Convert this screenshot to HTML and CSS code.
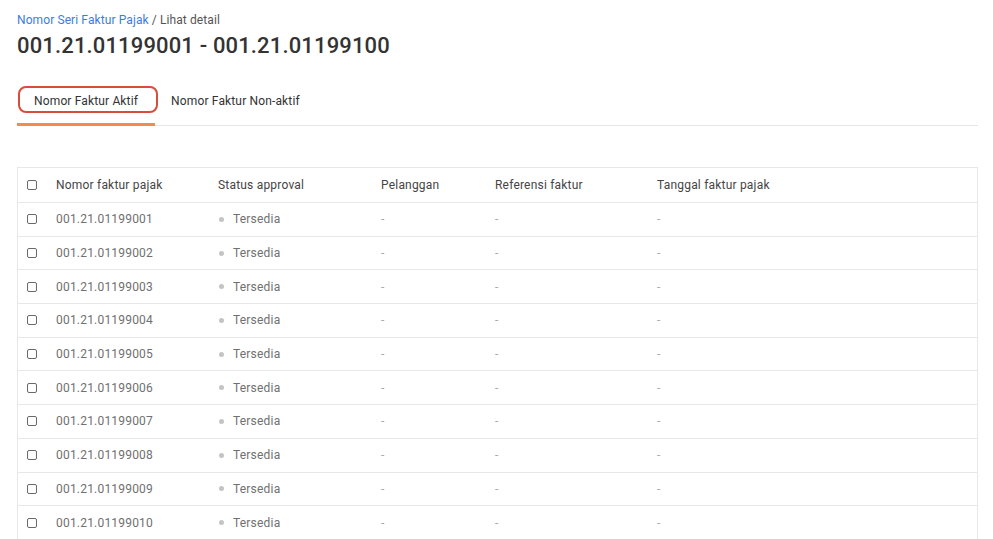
FILE: index.html
```html
<!DOCTYPE html>
<html lang="id">
<head>
<meta charset="utf-8">
<title>Nomor Seri Faktur Pajak</title>
<link rel="stylesheet" href="styles.css">
</head>
<body>
<div class="page">
  <div class="breadcrumb"><a class="crumb-link" href="#">Nomor Seri Faktur Pajak</a> / Lihat detail</div>
  <h1 class="title">001.21.01199001 - 001.21.01199100</h1>

  <div class="tabs">
    <div class="tab active">Nomor Faktur Aktif<span class="highlight"></span></div>
    <div class="tab">Nomor Faktur Non-aktif</div>
  </div>

  <div class="table">
    <div class="row head">
      <div class="cell cb"><span class="checkbox"></span></div>
      <div class="cell">Nomor faktur pajak</div>
      <div class="cell">Status approval</div>
      <div class="cell">Pelanggan</div>
      <div class="cell">Referensi faktur</div>
      <div class="cell">Tanggal faktur pajak</div>
    </div>
    <div class="row"><div class="cell cb"><span class="checkbox"></span></div><div class="cell">001.21.01199001</div><div class="cell"><span class="dot"></span>Tersedia</div><div class="cell dash">-</div><div class="cell dash">-</div><div class="cell dash">-</div></div>
    <div class="row"><div class="cell cb"><span class="checkbox"></span></div><div class="cell">001.21.01199002</div><div class="cell"><span class="dot"></span>Tersedia</div><div class="cell dash">-</div><div class="cell dash">-</div><div class="cell dash">-</div></div>
    <div class="row"><div class="cell cb"><span class="checkbox"></span></div><div class="cell">001.21.01199003</div><div class="cell"><span class="dot"></span>Tersedia</div><div class="cell dash">-</div><div class="cell dash">-</div><div class="cell dash">-</div></div>
    <div class="row"><div class="cell cb"><span class="checkbox"></span></div><div class="cell">001.21.01199004</div><div class="cell"><span class="dot"></span>Tersedia</div><div class="cell dash">-</div><div class="cell dash">-</div><div class="cell dash">-</div></div>
    <div class="row"><div class="cell cb"><span class="checkbox"></span></div><div class="cell">001.21.01199005</div><div class="cell"><span class="dot"></span>Tersedia</div><div class="cell dash">-</div><div class="cell dash">-</div><div class="cell dash">-</div></div>
    <div class="row"><div class="cell cb"><span class="checkbox"></span></div><div class="cell">001.21.01199006</div><div class="cell"><span class="dot"></span>Tersedia</div><div class="cell dash">-</div><div class="cell dash">-</div><div class="cell dash">-</div></div>
    <div class="row"><div class="cell cb"><span class="checkbox"></span></div><div class="cell">001.21.01199007</div><div class="cell"><span class="dot"></span>Tersedia</div><div class="cell dash">-</div><div class="cell dash">-</div><div class="cell dash">-</div></div>
    <div class="row"><div class="cell cb"><span class="checkbox"></span></div><div class="cell">001.21.01199008</div><div class="cell"><span class="dot"></span>Tersedia</div><div class="cell dash">-</div><div class="cell dash">-</div><div class="cell dash">-</div></div>
    <div class="row"><div class="cell cb"><span class="checkbox"></span></div><div class="cell">001.21.01199009</div><div class="cell"><span class="dot"></span>Tersedia</div><div class="cell dash">-</div><div class="cell dash">-</div><div class="cell dash">-</div></div>
    <div class="row"><div class="cell cb"><span class="checkbox"></span></div><div class="cell">001.21.01199010</div><div class="cell"><span class="dot"></span>Tersedia</div><div class="cell dash">-</div><div class="cell dash">-</div><div class="cell dash">-</div></div>
  </div>
</div>
</body>
</html>
```

FILE: styles.css
```css
* { box-sizing: border-box; }
html, body { margin: 0; padding: 0; background: #fff; }
body {
  font-family: Roboto, "Liberation Sans", Arial, sans-serif;
  color: #333;
  overflow: hidden;
}
.page {
  padding: 12px 15px 0 17px;
}
.breadcrumb {
  font-size: 12px;
  line-height: 16px;
  letter-spacing: 0.1px;
  color: #555;
}
.crumb-link {
  color: #3b7ddd;
  text-decoration: none;
}
.title {
  margin: 4px 0 0;
  font-size: 22px;
  line-height: 28px;
  font-weight: 500;
  color: #333;
  letter-spacing: 0.15px;
}
.tabs {
  margin-top: 23px;
  display: flex;
  border-bottom: 1px solid #e6e6e6;
}
.tab {
  position: relative;
  padding: 10px 17px 16px;
  font-size: 12px;
  line-height: 16px;
  letter-spacing: 0.15px;
  color: #333;
}
.tab + .tab { padding-left: 16px; }
.tab.active::after {
  content: "";
  position: absolute;
  left: 0;
  right: 0;
  bottom: -1px;
  height: 3px;
  background: #f28b4c;
}
.highlight {
  position: absolute;
  left: 1px;
  top: 3px;
  width: 140px;
  height: 27px;
  border: 2.5px solid #d84c3b;
  border-radius: 8px;
}
.table {
  margin-top: 41px;
  border: 1px solid #e8e8e8;
  border-bottom: none;
}
.row {
  display: grid;
  grid-template-columns: 38px 162px 163px 114px 162px 1fr;
  height: 33.7px;
  border-bottom: 1px solid #e8e8e8;
  align-items: center;
  font-size: 12px;
  letter-spacing: 0.2px;
  color: #707070;
}
.row.head {
  height: 35px;
  color: #454545;
}
.cell {
  display: flex;
  align-items: center;
  white-space: nowrap;
}
.cb { padding-left: 9px; }
.checkbox {
  display: inline-block;
  width: 10px;
  height: 10px;
  border: 1px solid #6a6a6a;
  border-radius: 2px;
  background: #fff;
}
.dot {
  display: inline-block;
  width: 5px;
  height: 5px;
  border-radius: 50%;
  background: #c4c4c4;
  margin: 0 9px 0 1px;
}
.dash { color: #aaa; }
```
